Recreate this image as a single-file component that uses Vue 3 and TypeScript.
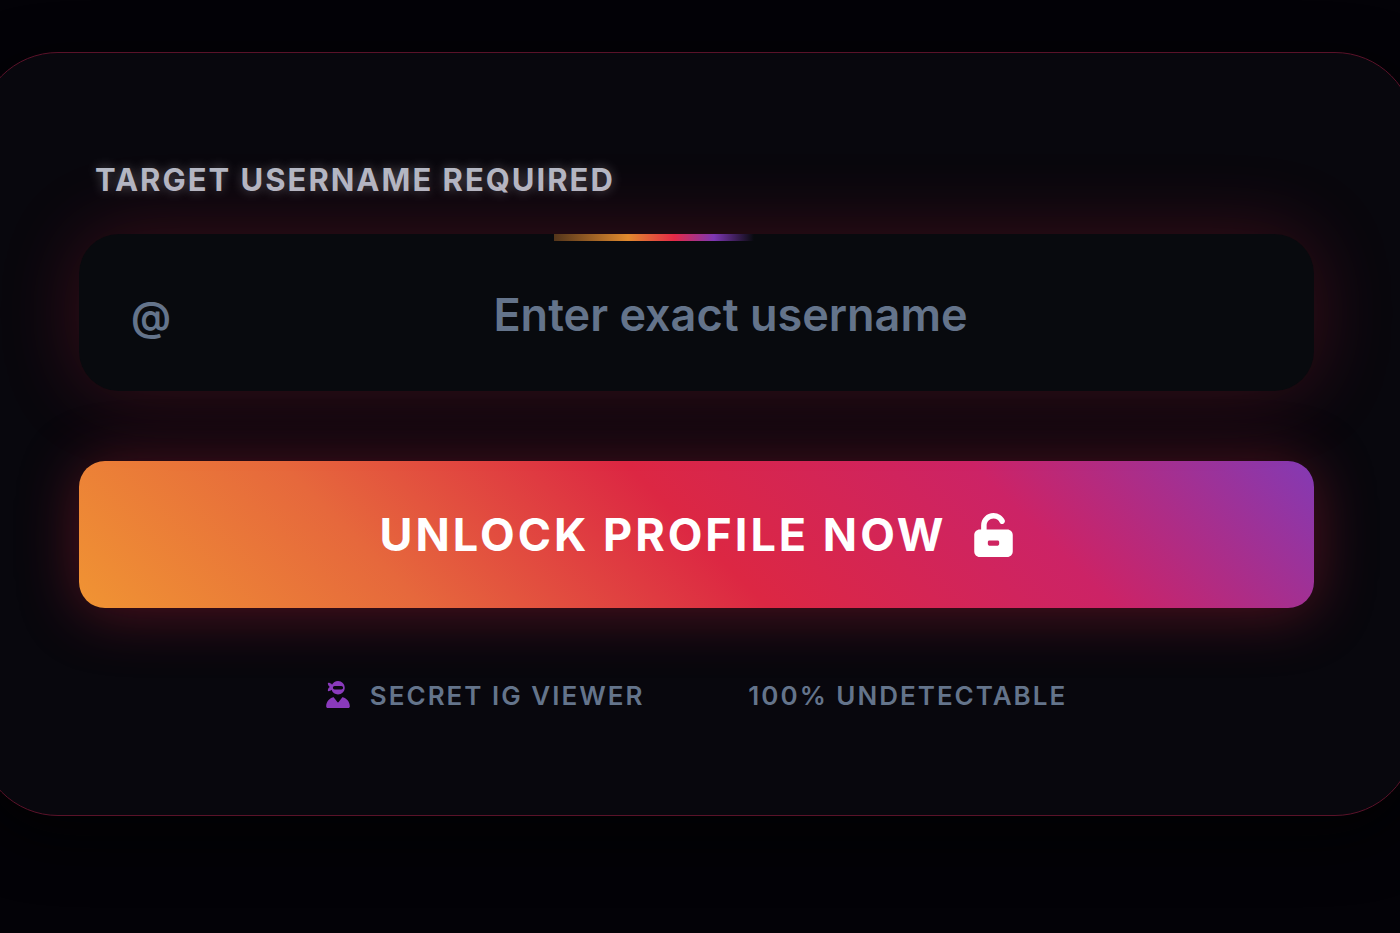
<script setup lang="ts">
import { ref } from 'vue'

const username = ref('')
</script>

<template>
  <main class="page">
    <form class="card" @submit.prevent>
      <label class="label" for="username">Target username required</label>
      <div class="field">
        <span class="accent" aria-hidden="true"></span>
        <span class="at" aria-hidden="true">@</span>
        <input
          id="username"
          v-model="username"
          class="input"
          type="text"
          placeholder="Enter exact username"
          autocomplete="off"
        />
      </div>
      <button class="unlock" type="submit">
        <span>Unlock profile now</span>
        <svg class="lock" viewBox="0 0 448 512" aria-hidden="true">
          <path
            fill="currentColor"
            d="M224 64c-44.2 0-80 35.8-80 80v48h240c35.3 0 64 28.7 64 64v192c0 35.3-28.7 64-64 64H64c-35.3 0-64-28.7-64-64V256c0-35.3 28.7-64 64-64h16v-48C80 64.5 144.500 0 224 0c57.5 0 107 33.7 130.1 82.3 7.6 16 .8 35.1-15.2 42.6s-35.100.8-42.600-15.200C283.4 82.6 255.9 64 224 64zm48 316c10 0 18-8 18-18v-24c0-10-8-18-18-18h-96c-10 0-18 8-18 18v24c0 10 8 18 18 18h96z"
          />
        </svg>
      </button>
      <div class="notes">
        <span class="note">
          <svg class="ninja" viewBox="0 0 448 512" aria-hidden="true">
            <path
              fill="currentColor"
              d="M224 256c-57.2 0-105.6-37.5-122-89.3c-1.1 1.3-2.2 2.6-3.5 3.8c-15.8 15.8-38.8 20.7-53.6 22.1c-8.1 .8-14.6-5.7-13.8-13.8c1.4-14.7 6.3-37.8 22.1-53.6c5.8-5.8 12.6-10.1 19.6-13.4c-7-3.2-13.8-7.6-19.6-13.4C37.4 82.7 32.6 59.7 31.1 44.9c-.8-8.1 5.7-14.6 13.8-13.8c14.7 1.4 37.8 6.3 53.6 22.1c4.8 4.8 8.7 10.4 11.7 16.1C131.4 28.2 174.4 0 224 0c70.7 0 128 57.3 128 128s-57.3 128-128 128zM0 482.3C0 399.5 56.4 330 132.8 309.9c6-1.6 12.2 .9 15.9 5.8l62.5 83.3c6.4 8.5 19.2 8.5 25.6 0l62.5-83.3c3.7-4.9 9.9-7.4 15.9-5.8C391.6 330 448 399.5 448 482.3c0 16.4-13.3 29.7-29.7 29.7L29.7 512C13.3 512 0 498.7 0 482.3zM160 96c-17.7 0-32 14.3-32 32s14.3 32 32 32l128 0c17.7 0 32-14.3 32-32s-14.3-32-32-32L160 96z"
            />
          </svg>
          Secret IG viewer
        </span>
        <span class="note">100% Undetectable</span>
      </div>
    </form>
  </main>
</template>

<style>
body {
  margin: 0;
  background: #030207;
}
</style>

<style scoped>
.page {
  box-sizing: border-box;
  min-height: 100vh;
  padding: 52px 0;
  overflow: hidden;
  background: #030207;
  font-family: Inter, "Open Sans", sans-serif;
}

.card {
  display: flex;
  flex-direction: column;
  margin: 0 -15px 0 -22px;
  padding: 105px 100px 101px;
  border: 1px solid #5a1229;
  border-radius: 80px;
  background: #08070d;
  box-shadow: 0 20px 60px #020203;
}

.label {
  margin-left: 16px;
  color: #b4b9c5;
  font-size: 31px;
  font-weight: 700;
  line-height: 44px;
  letter-spacing: 2px;
  text-transform: uppercase;
  text-shadow: 0 0 12px rgba(255, 255, 255, 0.3);
}

.field {
  position: relative;
  display: flex;
  align-items: center;
  height: 157px;
  margin-top: 32px;
  padding: 0 52px;
  border-radius: 40px;
  background: #080a0e;
  box-shadow: 0 0 80px rgba(220, 39, 67, 0.24);
}

.accent {
  position: absolute;
  top: 0;
  left: 38.5%;
  width: 200px;
  height: 7px;
  background: linear-gradient(90deg, #53351b, #e18a2e 37%, #e52a47 60%, #7d37b3 80%, transparent);
}

.at {
  padding-top: 8px;
  color: #64748b;
  font-size: 40px;
  font-weight: 600;
}

.input {
  flex: 1;
  box-sizing: border-box;
  min-width: 0;
  height: 100%;
  padding: 4px 0 0 28px;
  border: 0;
  outline: 0;
  background: transparent;
  color: #ffffff;
  font-family: inherit;
  font-size: 45px;
  font-weight: 600;
  text-align: center;
}

.input::placeholder {
  color: #64748b;
  opacity: 1;
}

.unlock {
  display: flex;
  align-items: center;
  justify-content: center;
  gap: 28px;
  height: 147px;
  margin-top: 70px;
  border: 0;
  border-radius: 26px;
  background: linear-gradient(45deg, #f09433 0%, #e6683c 25%, #dc2743 50%, #cc2366 75%, #833ab4 100%);
  box-shadow: 0 4px 60px rgba(220, 39, 67, 0.36);
  color: #ffffff;
  font-family: inherit;
  font-size: 45px;
  font-weight: 700;
  letter-spacing: 3px;
  text-transform: uppercase;
  cursor: pointer;
}

.lock {
  width: 39px;
  height: 44px;
}

.notes {
  display: flex;
  justify-content: center;
  gap: 104px;
  margin-top: 70px;
}

.note {
  display: flex;
  align-items: center;
  gap: 20px;
  color: #64748b;
  font-size: 26px;
  font-weight: 600;
  line-height: 36px;
  letter-spacing: 2px;
  text-transform: uppercase;
}

.ninja {
  width: 24px;
  height: 27px;
  padding-bottom: 3px;
  color: #8a3abc;
}
</style>
